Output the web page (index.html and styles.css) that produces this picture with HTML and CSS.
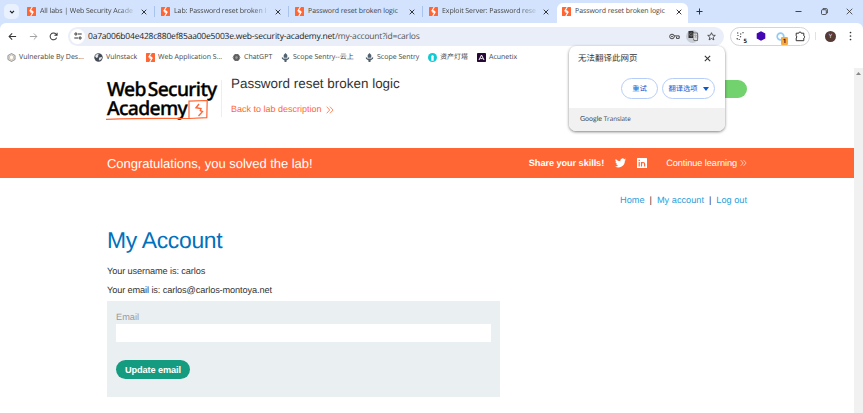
FILE: index.html
```html
<!DOCTYPE html>
<html lang="en">
<head>
<meta charset="utf-8">
<title>Password reset broken logic</title>
<link rel="stylesheet" href="styles.css">
</head>
<body>
<svg class="defs" width="0" height="0">
  <symbol id="burp" viewBox="0 0 9 9"><rect width="9" height="9" rx=".5" fill="#ff6633"/><path d="M5.3 0 3 3.7h1.5v1.5L6 4M3.2 4.7 4.5 5.2H6L3.8 9" fill="none" stroke="#fff" stroke-width="1.1"/></symbol>
  <symbol id="x" viewBox="0 0 6 6"><path d="m.7.7 4.6 4.6m0-4.6L.7 5.3" fill="none" stroke="currentColor" stroke-width=".9"/></symbol>
  <symbol id="scope" viewBox="0 0 9 9"><path d="M4.500 0 6.300 2v2.700H2.700V2zM.9 3.800l1.600 1.700h4l1.600-1.700v2L5.500 7.500V9h-2V7.500L.9 5.800z" fill="#52616f"/></symbol>
  <symbol id="more" viewBox="0 0 8 8"><path d="m.7.7 3 3.3-3 3.3M4 .7 7 4 4 7.3" fill="none" stroke="currentColor" stroke-width=".75"/></symbol>
</svg>

<header class="browser">
  <div class="tabs">
    <span class="tab-search"><svg width="6" height="4" viewBox="0 0 6 4"><path d="m1 .8 2 2 2-2" fill="none" stroke="#222" stroke-width="1.2"/></svg></span>
    <div class="tab first"><svg class="fav"><use href="#burp"/></svg><span class="title fade">All labs | Web Security Acade</span><svg class="close"><use href="#x"/></svg></div>
    <div class="tab"><svg class="fav"><use href="#burp"/></svg><span class="title fade">Lab: Password reset broken l</span><svg class="close"><use href="#x"/></svg></div>
    <div class="tab"><svg class="fav"><use href="#burp"/></svg><span class="title">Password reset broken logic</span><svg class="close"><use href="#x"/></svg></div>
    <div class="tab last"><svg class="fav"><use href="#burp"/></svg><span class="title fade">Exploit Server: Password rese</span><svg class="close"><use href="#x"/></svg></div>
    <div class="tab active"><svg class="fav"><use href="#burp"/></svg><span class="title">Password reset broken logic</span><svg class="close"><use href="#x"/></svg></div>
    <svg class="plus" width="7" height="7" viewBox="0 0 7 7"><path d="M3.5.5v6m-3-3h6" stroke="#333" stroke-width="1"/></svg>
    <div class="window-buttons">
      <svg width="7" height="7" viewBox="0 0 7 7"><path d="M.5 3.5h6" stroke="#333" stroke-width=".9"/></svg>
      <svg width="7" height="7" viewBox="0 0 7 7"><path d="M2 1.6V.6h3.2q1.2 0 1.2 1.2V5h-1" fill="none" stroke="#333" stroke-width=".8"/><rect x=".5" y="1.7" width="4.8" height="4.8" rx="1" fill="none" stroke="#333" stroke-width=".8"/></svg>
      <svg width="7" height="7" viewBox="0 0 7 7"><path d="m.7.7 5.6 5.6m0-5.6L.7 6.3" stroke="#333" stroke-width=".8"/></svg>
    </div>
  </div>

  <div class="toolbar">
    <svg class="nav" viewBox="0 0 8 8"><path d="M7.2 4H1m2.700-2.700L1 4l2.700 2.700" fill="none" stroke="#333" stroke-width=".9"/></svg>
    <svg class="nav" viewBox="0 0 8 8"><path d="M.8 4H7M4.300 1.300 7 4 4.300 6.700" fill="none" stroke="#999" stroke-width=".8"/></svg>
    <svg class="nav" viewBox="0 0 8 8"><path d="M6.8 5A3 3 0 1 1 6.3 2L7 2.8M7.2.6v2.3H4.8" fill="none" stroke="#333" stroke-width=".9"/></svg>
    <div class="omnibox">
      <span class="site"><svg width="8" height="8" viewBox="0 0 8 8"><g fill="none" stroke="#333" stroke-width="1"><circle cx="1.9" cy="2" r="1.1"/><path d="M4 2h3.7M.3 6H4"/><circle cx="6.1" cy="6" r="1.1"/></g></svg></span>
      <span class="url"><b>0a7a006b04e428c880ef85aa00e5003e.web-security-academy.net</b>/my-account?id=carlos</span>
      <svg class="key" width="11" height="7" viewBox="0 0 11 7"><circle cx="3" cy="3.5" r="2.3" fill="none" stroke="#333" stroke-width=".9"/><circle cx="3" cy="3.5" r=".8" fill="#333"/><path d="M5.2 2.9h5v2.5H7.5V3.7" fill="none" stroke="#333" stroke-width=".9"/></svg>
      <span class="translate"><svg width="10" height="10" viewBox="0 0 10 10"><path d="M.5 0h4.7l2.2 7H.5z" fill="#333"/><path d="M5.4 2h4.2v7.6H6L5.4 7.5" fill="#ddd" stroke="#444" stroke-width=".7"/><path d="M4.4 2.7a1.5 1.5 0 1 0 .1 1.5H3.1M7.3 3.2v1M5.9 4.5H9M8.3 4.6 6.8 7M7 5l1.4 2" fill="none" stroke="#999" stroke-width=".6"/></svg></span>
      <svg class="star" width="9" height="9" viewBox="0 0 9 9"><path d="m4.5.7 1.1 2.5 2.7.2-2.1 1.8.7 2.7-2.4-1.4-2.4 1.4.7-2.7L.7 3.4l2.7-.2z" fill="none" stroke="#333" stroke-width=".8"/></svg>
    </div>
    <div class="extensions">
      <span class="ext"><svg width="9" height="9" viewBox="0 0 9 9"><path d="M1 1h1.3M4 2h1.3M6.5.7h1M1.5 3.5h1M4 4.5l1 .6M.7 6.4l1 .8M2.7 7.5h1" stroke="#333" stroke-width="1.2"/></svg><i class="count">5</i></span>
      <span class="ext"><svg width="10" height="10" viewBox="0 0 10 10"><path d="m5 .2 4.3 2.4v4.8L5 9.8.7 7.4V2.6z" fill="#4206b3"/></svg></span>
      <span class="ext"><svg width="9" height="9" viewBox="0 0 9 9"><circle cx="4.5" cy="4.5" r="3.3" fill="none" stroke="#91cbf6" stroke-width="1.7"/></svg><i class="alert">1</i></span>
      <span class="ext"><svg width="11" height="11" viewBox="0 0 11 11"><path d="M1.2 2.2h2.6a1.2 1.2 0 0 1 2.4 0h2.6v2.6a1.2 1.2 0 0 1 0 2.3v2.6H1.2V7q1.5-1 0-2.2z" fill="none" stroke="#333" stroke-width="1"/></svg></span>
    </div>
    <span class="divider"></span>
    <span class="avatar">Y</span>
    <svg class="menu" width="3" height="10" viewBox="0 0 3 10"><g fill="#333"><circle cx="1.5" cy="1.5" r=".85"/><circle cx="1.5" cy="5" r=".85"/><circle cx="1.5" cy="8.5" r=".85"/></g></svg>
  </div>

  <nav class="bookmarks">
    <a class="b1"><svg viewBox="0 0 9 9"><path d="m4.5.5 3.6 2v4l-3.6 2-3.6-2v-4z" fill="#ddd" stroke="#777" stroke-width=".7"/><path d="m4.5 2 2 1.3v2.2l-2 1.3-2-1.3V3.3z" fill="#fff" stroke="#e9a764" stroke-width=".7"/></svg>Vulnerable By Des...</a>
    <a class="b2"><svg viewBox="0 0 9 9"><circle cx="4.5" cy="4.5" r="4.2" fill="#454c55"/><path d="m1 3 2-2 2 .6L3.7 3l.7 1L2.3 5zM5.3 4.5l2.8-.4-.6 2-2 1.5-.7-1.4z" fill="#e4e7eb"/></svg>Vulnstack</a>
    <a class="b3"><svg><use href="#burp"/></svg>Web Application S...</a>
    <a class="b4"><svg viewBox="0 0 9 9"><circle cx="4.500" cy="4.500" r="3.200" fill="#999"/><g fill="none" stroke="#555" stroke-width=".8"><ellipse cx="4.5" cy="4.5" rx="3.400" ry="1.800"/><ellipse cx="4.5" cy="4.5" rx="3.400" ry="1.800" transform="rotate(60 4.5 4.5)"/><ellipse cx="4.5" cy="4.5" rx="3.400" ry="1.800" transform="rotate(120 4.5 4.5)"/></g></svg>ChatGPT</a>
    <a class="b5"><svg><use href="#scope"/></svg>Scope Sentry--云上</a>
    <a class="b6"><svg><use href="#scope"/></svg>Scope Sentry</a>
    <a class="b7"><svg viewBox="0 0 9 9"><circle cx="4.5" cy="4.5" r="4.5" fill="#12cbd2"/><path d="M3.3 7.8V3.2q1.2-2.3 2.4 0v4.6z" fill="#fff"/></svg>资产灯塔</a>
    <a class="b8"><svg viewBox="0 0 9 9"><rect width="9" height="9" rx=".7" fill="#260837"/><path d="m2 7 2.5-5L7 7M3.4 5.6h2.2" fill="none" stroke="#fff" stroke-width="1"/></svg>Acunetix</a>
  </nav>
</header>

<div class="viewport">
  <div class="page">
    <header class="lab">
      <div class="logo">Web Security<br>Academy
        <svg width="103" height="21" viewBox="0 0 103 21"><path d="M0 19.3q38-1.3 83-.8V1.2l18.2-.7-.4 17.2-17.8.8" fill="none" stroke="#ff6633" stroke-width="1.2"/><path d="m93 4-3 3.800 5 .8-.7 2 2.200 1-4 4.400" fill="none" stroke="#ff6633" stroke-width="1.4"/></svg>
      </div>
      <div class="lab-title"><h2>Password reset broken logic</h2><a>Back to lab description <svg width="8" height="8"><use href="#more"/></svg></a></div>
      <span class="status"></span>
    </header>
    <section class="banner">
      <h4>Congratulations, you solved the lab!</h4>
      <b class="share">Share your skills!</b>
      <svg class="twitter" width="11" height="10" viewBox="0 0 24 20"><path d="M24 2.4a10 10 0 0 1-2.8.8A5 5 0 0 0 23.3.4a10 10 0 0 1-3.1 1.2 4.9 4.9 0 0 0-8.4 4.5A14 14 0 0 1 1.7 1 4.9 4.9 0 0 0 3.2 7.600a5 5 0 0 1-2.200-.6 4.900 4.900 0 0 0 3.900 4.900 5 5 0 0 1-2.200.1 4.900 4.900 0 0 0 4.600 3.400A9.900 9.900 0 0 1 0 17.500 14 14 0 0 0 21.500 5 10 10 0 0 0 24 2.400z" fill="#fff"/></svg>
      <svg class="linkedin" width="10" height="10" viewBox="0 0 10 10"><rect width="10" height="10" rx=".5" fill="#fff"/><path d="M2.200 4v4.400M2.200 1.700V3M4.500 8.400V4M4.500 5.700q0-1.200 1.500-1.200 1.600 0 1.600 1.300v2.600" fill="none" stroke="#ff6633" stroke-width="1.200"/></svg>
      <a>Continue learning <svg width="7" height="8"><use href="#more"/></svg></a>
    </section>
    <main>
      <nav class="links"><a>Home</a><span>|</span><a>My account</a><span>|</span><a>Log out</a></nav>
      <h1>My Account</h1>
      <p>Your username is: carlos</p>
      <p class="email">Your email is: carlos@carlos-montoya.net</p>
      <form>
        <label for="email">Email</label>
        <input id="email" type="email">
        <button type="button">Update email</button>
      </form>
    </main>
  </div>
  <div class="scrollbar"><svg width="5" height="3" viewBox="0 0 5 3"><path d="m0 3 2.500-3L5 3z" fill="#888"/></svg></div>
</div>

<aside class="popup">
  <div class="popup-head"><span>无法翻译此网页</span><svg width="7" height="7"><use href="#x"/></svg></div>
  <div class="popup-actions"><span class="pill retry">重试</span><span class="pill options">翻译选项<svg width="6" height="4" viewBox="0 0 6 4"><path d="M0 0h6L3 4z" fill="#0b57d0"/></svg></span></div>
  <div class="popup-foot"><span class="google">Google</span> <span class="tr">Translate</span></div>
</aside>
</body>
</html>
```
FILE: styles.css
```css
* { box-sizing: border-box; }
body { margin: 0; width: 863px; height: 413px; overflow: hidden; background: #fff; font-family: "Liberation Sans", Arial, sans-serif; color: #333; text-rendering: geometricPrecision; }
svg { flex: none; display: block; }
.defs { position: absolute; }
h1, h2, h4, p { margin: 0; font-weight: 400; }

.browser { height: 68px; background: #d3e3fd; font-family: "Open Sans", "Noto Sans CJK SC", sans-serif; }
.tabs { display: flex; align-items: center; height: 23px; padding-left: 4px; }
.tab-search { width: 15px; height: 15px; border-radius: 5px; background: #eaf1fe; display: grid; place-items: center; }
.tab { display: flex; align-items: center; width: 134px; height: 11px; padding-left: 6px; border-right: 1px solid #a8c3ee; font-size: 7px; letter-spacing: -.07px; color: #444; flex: none; }
.tab.first { margin-left: 2px; width: 134px; }
.tab.last { border-color: transparent; }
.tab.active { position: relative; height: 20px; margin-top: 3px; width: 131px; padding: 0 0 3px 5px; background: #fff; border: 0; border-radius: 6px 6px 0 0; }
.fav { width: 9px; height: 9px; margin-right: 4px; }
.title { width: 97px; white-space: nowrap; line-height: 12px; }
.fade { mask-image: linear-gradient(90deg, #000 80%, transparent); }
.close { width: 6px; height: 6px; margin-left: 4px; color: #222; }
.plus { margin-left: 8px; }
.window-buttons { display: flex; gap: 18.500px; margin-left: auto; padding-right: 10px; }

.toolbar { display: flex; align-items: center; height: 26px; background: #fff; border-radius: 6px 6px 0 0; padding-left: 8px; }
.nav { width: 9px; height: 9px; margin-right: 11.500px; }
.omnibox { display: flex; align-items: center; width: 656px; height: 19px; margin-left: -1.500px; border-radius: 10px; background: #e9eef9; padding-left: 2px; flex: none; }
.site { width: 15px; height: 15px; border-radius: 50%; background: #fff; display: grid; place-items: center; }
.url { margin-left: 3px; font-size: 8.500px; letter-spacing: -.2px; color: #555; white-space: nowrap; }
.url b { font-weight: 400; color: #222; }
.key { margin-left: auto; }
.translate { width: 13px; height: 13px; border-radius: 50%; background: #c8cdd6; display: grid; place-items: center; margin: 0 6px; }
.star { margin: 0 8px 0 2px; }
.extensions { display: flex; align-items: center; width: 80px; height: 19px; border: 1px solid #d3d5da; border-radius: 10px; margin-left: 6px; padding-left: 4px; gap: 9px; flex: none; }
.ext { position: relative; width: 11px; height: 11px; display: grid; place-items: center; }
.count, .alert { position: absolute; font: 700 6px/7px "Open Sans", sans-serif; right: -1px; bottom: -3px; color: #222; background: #fff; }
.alert { right: -2px; background: #f5ac3d; border-radius: 1px; width: 7px; height: 8px; text-align: center; line-height: 8px; }
.divider { width: 1px; height: 8px; background: #d3e3fd; margin: 0 9px 0 5px; }
.avatar { width: 11px; height: 11px; border-radius: 50%; background: #553a35; color: #eee; font: 6px/11px "Open Sans", sans-serif; text-align: center; flex: none; }
.menu { margin-left: 13px; }

.bookmarks { display: flex; align-items: center; height: 19px; padding-bottom: 3px; background: #fff; font-size: 7px; line-height: 11px; color: #444; padding-left: 7px; }
.bookmarks a { display: flex; align-items: center; white-space: nowrap; flex: none; }
.bookmarks svg { width: 9px; height: 9px; margin-right: 3px; }
.b1 { width: 87px; }
.b2 { width: 52px; }
.b3 { width: 86px; }
.b4 { width: 49px; }
.b5 { width: 84px; }
.b6 { width: 63px; }
.b7 { width: 49px; }

.viewport { display: flex; height: 345px; }
.page { width: 854px; }
.scrollbar { width: 9px; background: #f1f1f1; display: flex; justify-content: center; padding-top: 4px; }
.lab { display: flex; height: 80px; padding: 11px 107px 0; }
.logo { position: relative; width: 115px; height: 37px; border-right: 1px solid #eee; color: #000; font: 500 19.300px/18.500px "Noto Sans", sans-serif; letter-spacing: -.65px; word-spacing: -2.500px; -webkit-text-stroke: .35px #000; white-space: nowrap; margin-top: 1px; }
.logo svg { position: absolute; left: -1px; top: 20px; }
.lab-title { margin-left: 9px; }
.lab-title h2 { font-size: 13.450px; line-height: 15px; margin-top: -3px; white-space: nowrap; }
.lab-title a { display: flex; align-items: center; gap: 4px; margin-top: 13px; font-size: 9px; line-height: 11px; color: #ff6633; }
.status { width: 80px; height: 18px; background: #72d26d; border-radius: 9px; margin-left: auto; margin-top: 1px; }
.banner { display: flex; align-items: center; height: 30px; background: #ff6633; color: #fff; padding: 0 107px; font-size: 9.200px; letter-spacing: -.07px; }
.banner h4 { font-size: 13px; letter-spacing: -.03px; }
.share { margin-left: auto; }
.twitter { margin-left: 11px; }
.linkedin { margin: 0 19px 0 11px; }
.banner a { display: flex; align-items: center; gap: 3px; }
main { padding: 16px 107px 0; font-size: 9.200px; }
.links { display: flex; justify-content: flex-end; gap: 5px; line-height: 12px; }
.links a { color: #29a0dc; }
h1 { font-size: 22.900px; letter-spacing: -.3px; line-height: 28px; color: #0071bc; margin-top: 20px; }
p { line-height: 12px; margin-top: 11px; letter-spacing: -.11px; }
p.email { margin-top: 7px; }
form { width: 393px; height: 96px; margin-top: 5px; padding: 10px 9px; background: #eaeff2; }
label { display: block; line-height: 12px; color: #999; }
input { display: block; width: 100%; height: 18px; margin-top: 1px; border: 0; background: #fff; }
button { display: block; width: 74px; height: 19px; margin-top: 18px; padding: 0; border: 0; border-radius: 10px; background: #159b7f; color: #fff; font: 700 9.200px "Liberation Sans", Arial, sans-serif; letter-spacing: -.1px; }

.popup { position: absolute; left: 569px; top: 46px; width: 156px; height: 85px; border-radius: 7px; background: #fff; overflow: hidden; box-shadow: 0 1px 3px rgba(0,0,0,.5); font-family: "Noto Sans CJK SC", sans-serif; }
.popup-head { display: flex; align-items: center; justify-content: space-between; height: 24px; padding: 0 14px 0 9px; font-size: 8.500px; }
.popup-actions { display: flex; justify-content: flex-end; gap: 4px; height: 38px; padding: 8px 10px 0 0; }
.pill { display: flex; align-items: center; justify-content: center; height: 21px; border: 1px solid #b5cdf8; border-radius: 11px; color: #0b57d0; font-size: 7.300px; }
.retry { width: 37px; }
.options { width: 53px; gap: 5px; }
.popup-foot { height: 23px; background: #f1f1f1; padding-left: 11px; font: 6.300px/21px "Open Sans", sans-serif; color: #444; }
.google { font-family: Lato, sans-serif; font-size: 7px; }
```
